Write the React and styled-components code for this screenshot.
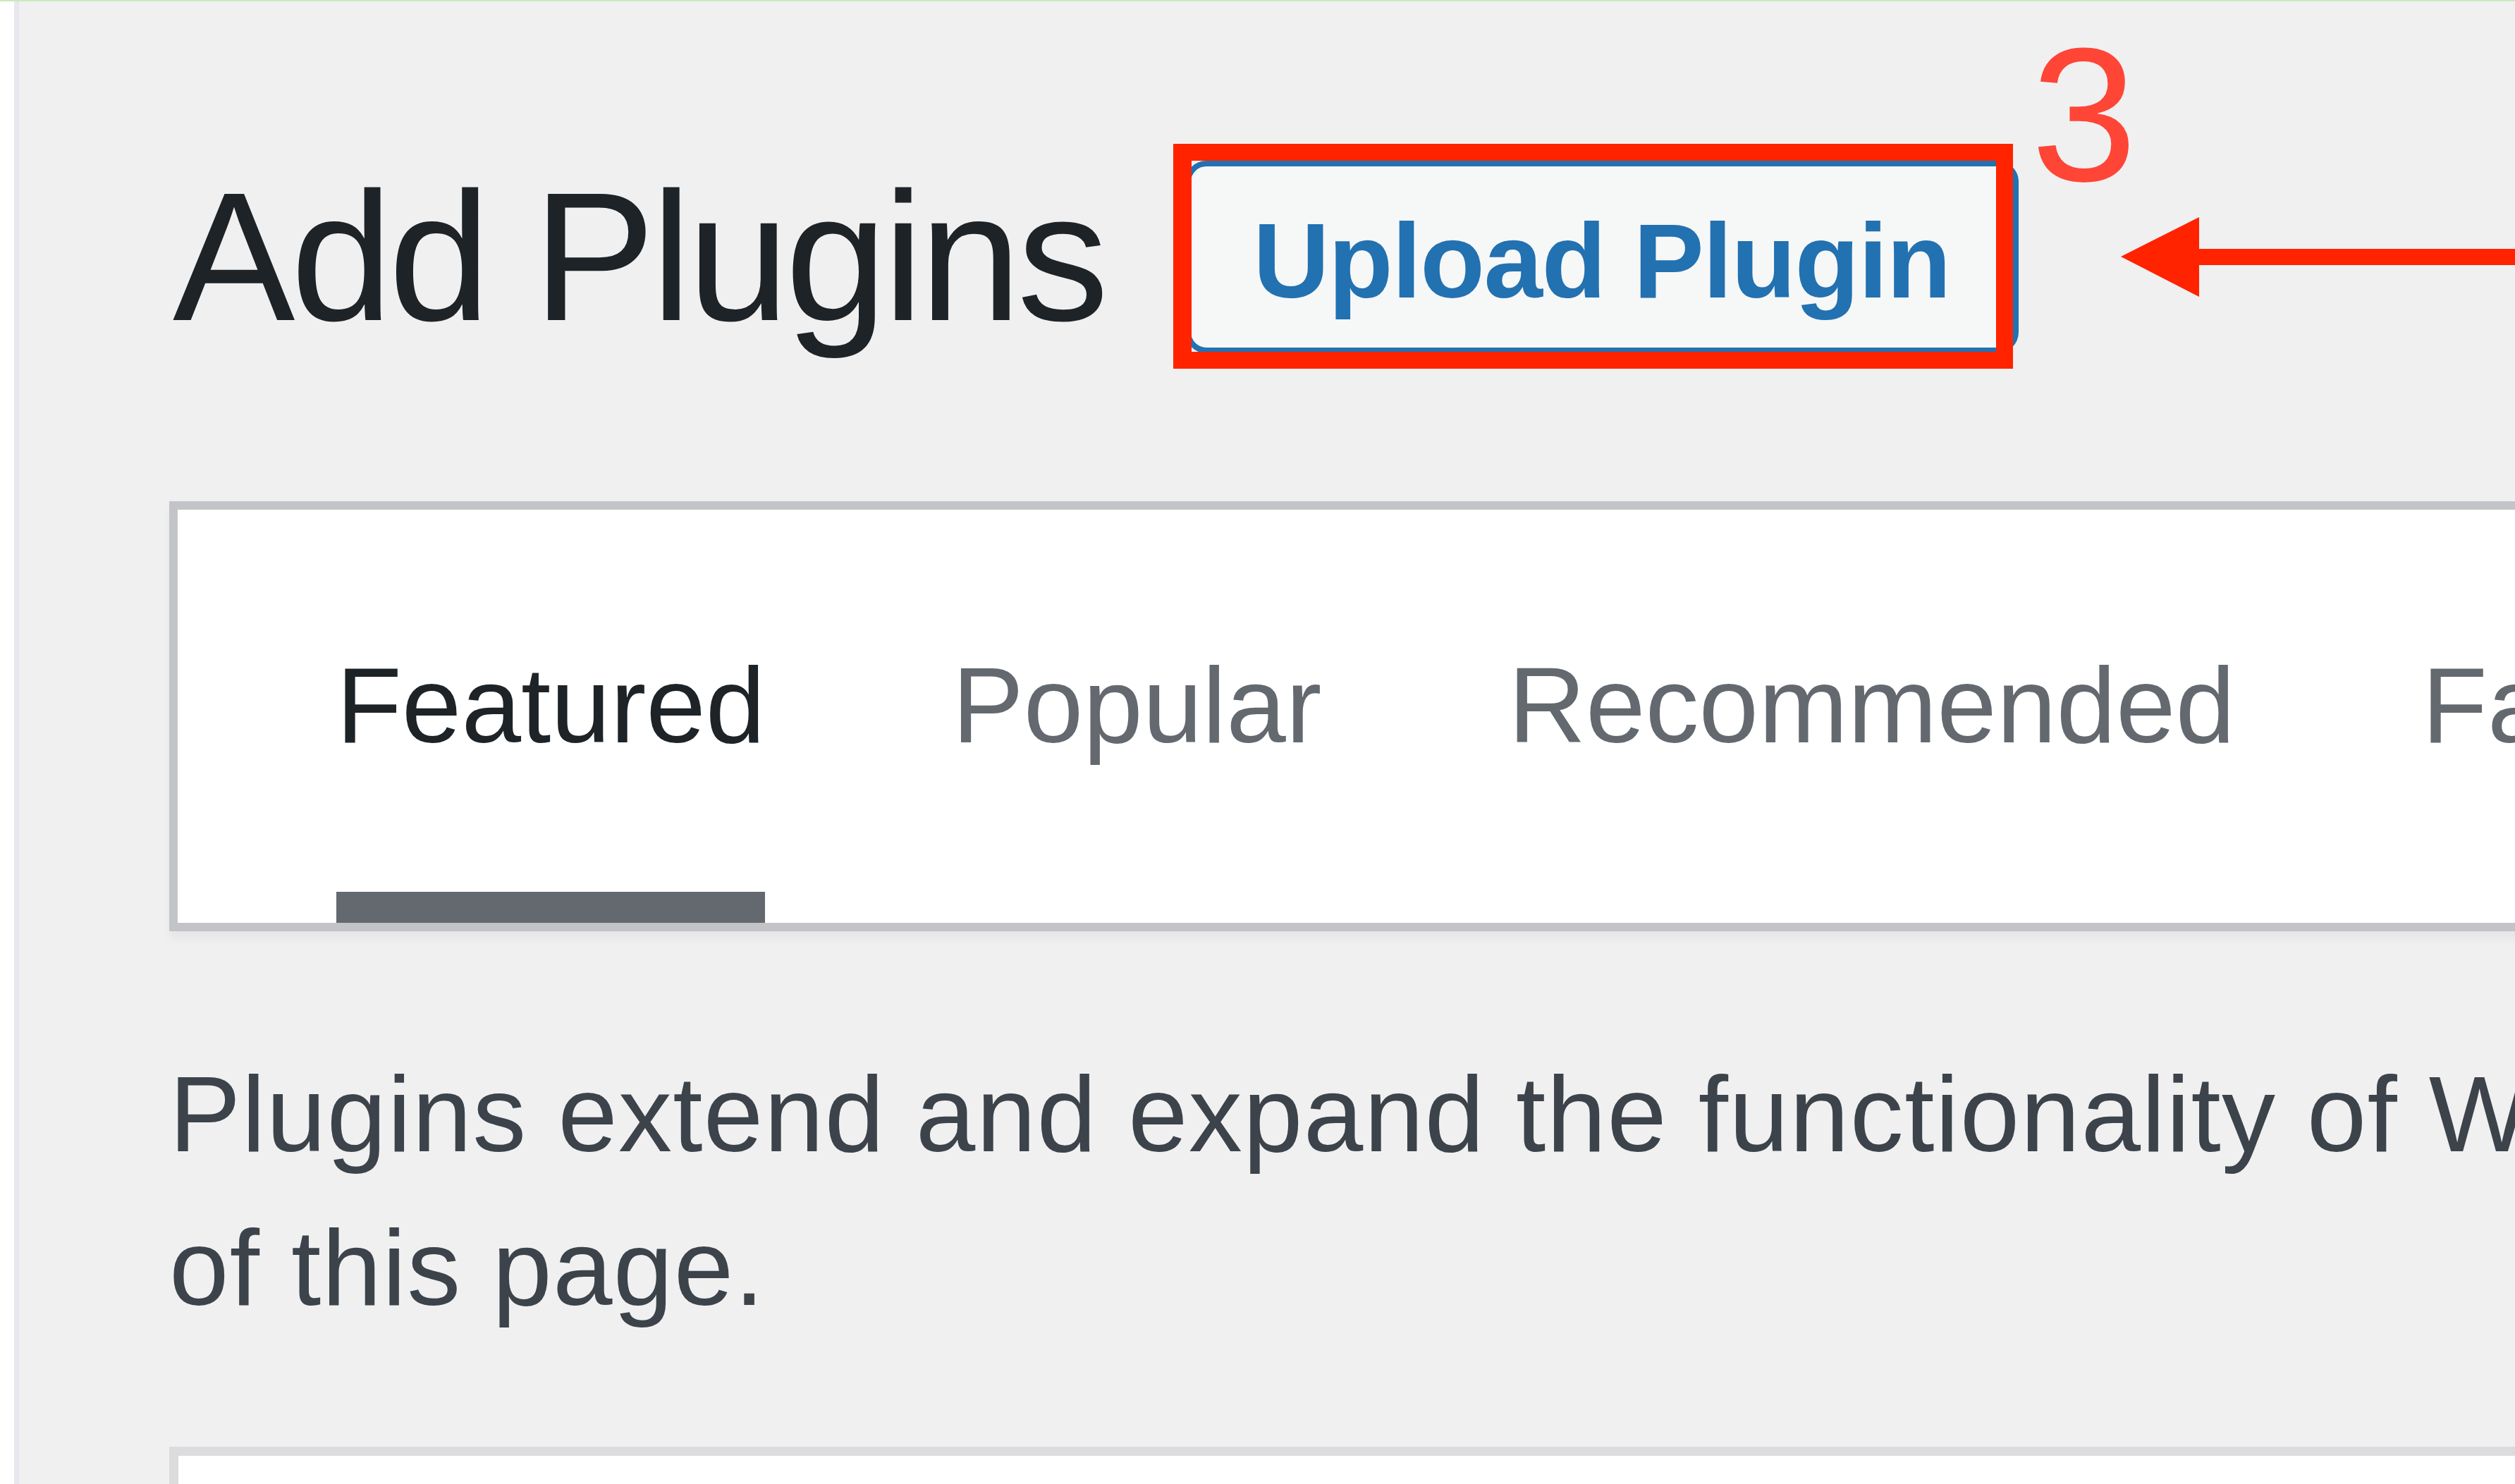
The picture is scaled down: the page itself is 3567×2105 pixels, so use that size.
import React from "react"
import styled, { createGlobalStyle } from "styled-components"

// page-wide reset, the screenshot is a zoomed wp-admin view
const GlobalStyle = createGlobalStyle`
  html, body {
    margin: 0;
    padding: 0;
    height: 100%;
    overflow: hidden;
    background: #ffffff;
  }
  body {
    font-family: "Liberation Sans", Arial, sans-serif;
  }
`

const Shell = styled.div`
  display: flex;
  min-height: 100vh;
  border-top: 2px solid #cbeabb;
  overflow: hidden;
`

const MenuEdge = styled.div`
  width: 20px;
  flex-shrink: 0;
  background: #ffffff;
`

const Content = styled.main`
  flex: 1;
  min-width: 0;
  background: #f0f0f1;
  border-left: 7px solid #e7e7ee;
  padding: 193px 0 0 213px;
  overflow: hidden;
`

const HeaderRow = styled.div`
  display: flex;
  align-items: center;
`

const Title = styled.h1`
  margin: 0 0 0 5px;
  font-size: 260px;
  font-weight: 400;
  line-height: 338px;
  letter-spacing: -6px;
  color: #1d2327;
  white-space: nowrap;
`

const ActionWrap = styled.div`
  position: relative;
  margin-left: 114px;
  flex-shrink: 0;
`

const UploadButton = styled.a`
  box-sizing: border-box;
  display: flex;
  align-items: center;
  justify-content: center;
  width: 1182px;
  height: 273px;
  padding-top: 12px;
  background: #f6f7f7;
  border: 8px solid #2271b1;
  border-radius: 30px;
  color: #2271b1;
  font-size: 150px;
  font-weight: 700;
  line-height: 150px;
  letter-spacing: -1.5px;
  text-decoration: none;
  white-space: nowrap;
`

/* annotation layer drawn over the screenshot */
const Highlight = styled.div`
  position: absolute;
  left: -17px;
  top: -24px;
  width: 1191px;
  height: 319px;
  box-sizing: border-box;
  border: 24px solid #ff2300;
  border-left-width: 26px;
  pointer-events: none;
`

const StepNumber = styled.span`
  position: absolute;
  left: 1200px;
  top: -200px;
  font-size: 270px;
  line-height: 270px;
  color: #ff4536;
  font-weight: 400;
`

const ArrowSvg = styled.svg`
  position: absolute;
  left: 1327px;
  top: 80px;
  overflow: visible;
`

const FilterBar = styled.div`
  margin-top: 178px;
  margin-right: -300px;
  background: #ffffff;
  border: 12px solid #c3c4c7;
  box-shadow: 0 11px 11px rgba(0, 0, 0, 0.04);
`

const FilterLinks = styled.ul`
  display: flex;
  gap: 265px;
  margin: 0;
  padding: 0 0 0 225px;
  list-style: none;
  white-space: nowrap;
`

const FilterItem = styled.li`
  padding: 165px 0 152px;
  font-size: 152px;
  line-height: 225px;
  color: ${(p) => (p.$active ? "#1d2327" : "#646970")};
  border-bottom: 44px solid ${(p) => (p.$active ? "#646970" : "#ffffff")};
`

const Intro = styled.p`
  margin: 150px 0 0;
  font-size: 152px;
  line-height: 218px;
  letter-spacing: 1.3px;
  color: #3c434a;
  white-space: nowrap;
`

const PluginCard = styled.div`
  margin-top: 145px;
  margin-right: -300px;
  height: 400px;
  background: #ffffff;
  border: 13px solid #dcdcde;
`

const tabs = ["Featured", "Popular", "Recommended", "Favorites"]

const App = () => {
  return (
    <>
      <GlobalStyle />
      <Shell>
        <MenuEdge />
        <Content>
          <HeaderRow>
            <Title>Add Plugins</Title>
            <ActionWrap>
              <UploadButton href="#">Upload Plugin</UploadButton>
              <Highlight />
              <StepNumber>3</StepNumber>
              <ArrowSvg width="700" height="113" viewBox="0 0 700 113">
                <polygon points="0,56 111,0 111,113" fill="#ff2300" />
                <rect x="110" y="45" width="590" height="23" fill="#ff2300" />
              </ArrowSvg>
            </ActionWrap>
          </HeaderRow>

          <FilterBar>
            <FilterLinks>
              {tabs.map((t, i) => (
                <FilterItem key={t} $active={i === 0}>
                  {t}
                </FilterItem>
              ))}
            </FilterLinks>
          </FilterBar>

          <Intro>
            Plugins extend and expand the functionality of WordPress. You may
            automatically install plugins from the WordPress Plugin Directory or
            upload a plugin in .zip format by clicking the button at the top
            <br />
            of this page.
          </Intro>

          <PluginCard />
        </Content>
      </Shell>
    </>
  )
}

export default App
